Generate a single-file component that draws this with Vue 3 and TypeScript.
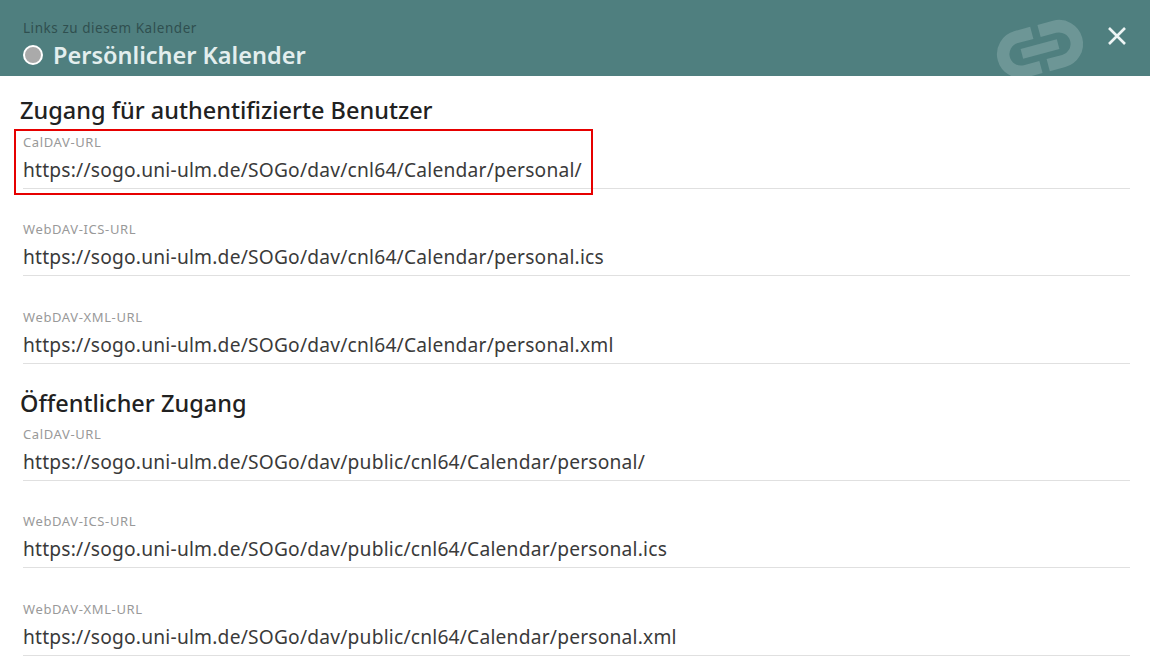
<script setup lang="ts">
interface LinkRow {
  label: string;
  url: string;
}
interface LinkGroup {
  title: string;
  rows: LinkRow[];
}

const base = "https://sogo.uni-ulm.de/SOGo/dav";

const groups: LinkGroup[] = [
  {
    title: "Zugang für authentifizierte Benutzer",
    rows: [
      { label: "CalDAV-URL", url: `${base}/cnl64/Calendar/personal/` },
      { label: "WebDAV-ICS-URL", url: `${base}/cnl64/Calendar/personal.ics` },
      { label: "WebDAV-XML-URL", url: `${base}/cnl64/Calendar/personal.xml` }
    ]
  },
  {
    title: "Öffentlicher Zugang",
    rows: [
      { label: "CalDAV-URL", url: `${base}/public/cnl64/Calendar/personal/` },
      { label: "WebDAV-ICS-URL", url: `${base}/public/cnl64/Calendar/personal.ics` },
      { label: "WebDAV-XML-URL", url: `${base}/public/cnl64/Calendar/personal.xml` }
    ]
  }
];
</script>

<template>
  <div class="dialog">
    <header class="toolbar">
      <div class="heading">
        <div class="subtitle">Links zu diesem Kalender</div>
        <div class="title">
          <span class="dot"></span>
          <span>Persönlicher Kalender</span>
        </div>
      </div>
      <svg class="watermark" viewBox="0 0 24 24" aria-hidden="true">
        <path d="M11.1 7.75H7.25a4.25 4.25 0 0 0 0 8.5h3.85" />
        <path d="M12.9 7.75h3.85a4.25 4.25 0 0 1 0 8.5H12.9" />
        <path class="bar" d="M7.5 12h9" />
      </svg>
      <button class="close" type="button" aria-label="Schließen">
        <svg viewBox="0 0 20 20" width="20" height="20" aria-hidden="true">
          <path d="M2 2 18 18M18 2 2 18" />
        </svg>
      </button>
    </header>

    <main class="content">
      <section v-for="group in groups" :key="group.title" class="group">
        <h2>{{ group.title }}</h2>
        <div v-for="row in group.rows" :key="row.url" class="field">
          <label>{{ row.label }}</label>
          <div class="value">{{ row.url }}</div>
        </div>
      </section>
      <div class="marker"></div>
    </main>
  </div>
</template>

<style>
html,
body {
  margin: 0;
  background: #fff;
}
</style>

<style scoped>
.dialog {
  width: 1150px;
  height: 672px;
  overflow: hidden;
  font-family: "Noto Sans", "Open Sans", sans-serif;
  color: #212121;
  background: #fff;
}

.toolbar {
  position: relative;
  height: 76px;
  overflow: hidden;
  box-sizing: border-box;
  padding: 19px 23px 0;
  background: #4f7f7f;
}

.subtitle {
  font-size: 13.5px;
  line-height: 18px;
  letter-spacing: 0.55px;
  color: #2f4f4f;
}

.title {
  display: flex;
  align-items: center;
  gap: 10px;
  margin-top: 2px;
  font-size: 23.5px;
  line-height: 32px;
  font-weight: 600;
  color: #e3eeee;
}

.dot {
  width: 16px;
  height: 16px;
  border: 2px solid #fff;
  border-radius: 50%;
  background: #aaa;
}

.watermark {
  position: absolute;
  left: 990px;
  top: -1px;
  width: 100px;
  height: 100px;
  fill: none;
  stroke: #6d9696;
  stroke-width: 3;
  transform: rotate(-15deg);
}

.watermark .bar {
  stroke-width: 2.4;
}

.close {
  position: absolute;
  left: 1107px;
  top: 26px;
  width: 20px;
  height: 20px;
  padding: 0;
  border: 0;
  background: none;
}

.close path {
  fill: none;
  stroke: #eef5f5;
  stroke-width: 2.6;
}

.content {
  position: relative;
  padding: 0 20px 0 23px;
}

.group + .group {
  margin-top: 22.3px;
}

.group:first-of-type {
  padding-top: 17px;
}

.group h2 {
  margin: 0 0 6px -3px;
  font-size: 23.5px;
  line-height: 34px;
  font-weight: 500;
  color: #212121;
}

.group + .group h2 {
  margin-bottom: 5px;
}

.field {
  height: 56px;
  box-sizing: border-box;
}

.field + .field {
  margin-top: 31.4px;
}

.field label {
  display: block;
  font-size: 13px;
  line-height: 18px;
  letter-spacing: 0.62px;
  color: #999;
}

.value {
  height: 38px;
  box-sizing: border-box;
  padding-top: 5px;
  border-bottom: 1px solid #e0e0e0;
  font-size: 19.2px;
  line-height: 28px;
  letter-spacing: 0.21px;
  color: #3a3a3a;
}

.marker {
  position: absolute;
  left: 14px;
  top: 53px;
  width: 575px;
  height: 62px;
  border: 2px solid #e60000;
  pointer-events: none;
}
</style>
